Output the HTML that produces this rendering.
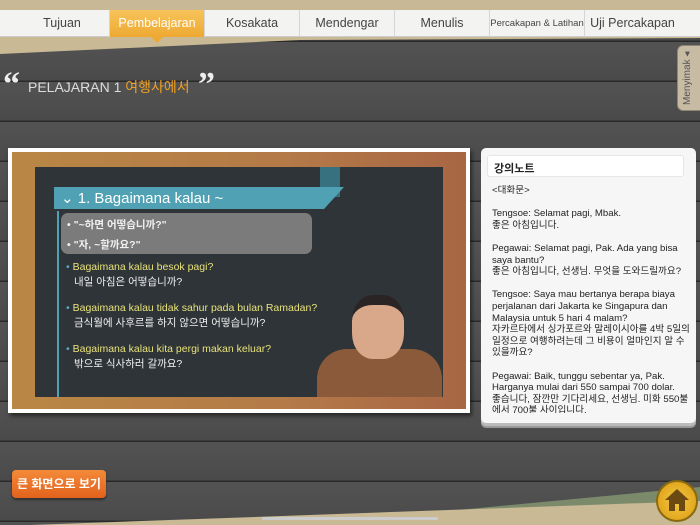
<!DOCTYPE html>
<html><head><meta charset="utf-8"><style>
*{margin:0;padding:0;box-sizing:border-box}
body{width:700px;height:525px;overflow:hidden;position:relative;font-family:"Liberation Sans","Noto Sans CJK KR",sans-serif;
background:#4b4b4b;}
.wood{position:absolute;inset:0;background:repeating-linear-gradient(180deg,#535353 0px,#4a4a4a 38px,#2a2a2a 39px,#2a2a2a 40px);background-position:0 2px}
.abs{position:absolute}
.nav{position:absolute;left:0;top:10px;width:700px;height:27px;background:#f3f3f1;border-bottom:1px solid #ccc}
.tab{position:absolute;top:0;height:27px;line-height:27px;text-align:center;font-size:12.5px;color:#444;border-right:1px solid #d5d5d5}
.note{position:absolute;left:481px;top:148px;width:215px;height:275px;background:#f6f6f6;border-radius:5px;box-shadow:0 3px 0 #bbb,0 5px 0 #999}
.note .hd{position:absolute;left:6px;top:7px;width:197px;height:22px;background:#fff;border:1px solid #e6e6e6;border-radius:3px;font-size:11px;font-weight:bold;padding:4px 6px;color:#222}
.note .tx{position:absolute;left:11px;top:37px;width:200px;font-size:9.6px;line-height:11.6px;color:#222;height:228px;overflow:hidden}
.scr{position:absolute;left:35px;top:167px;width:408px;height:230px;background:#2f3438;overflow:hidden}
.y{color:#e8e27a;font-size:10.5px}
.w{color:#f0f0f0;font-size:10.5px}
</style></head><body>
<div class="wood"></div>
<div class="abs" style="left:0;top:0;width:700px;height:12px;background:#c8b895"></div>
<svg class="abs" style="left:0;top:36px" width="700" height="20"><polygon points="0,0 700,0 700,2 300,4 0,18" fill="#c9b994"/></svg>
<div class="nav">
<div class="tab" style="left:0;width:110px;padding-left:15px">Tujuan</div>
<div class="tab" style="left:110px;width:95px;background:linear-gradient(#f7c35a,#eea932);color:#fff">Pembelajaran</div>
<div class="tab" style="left:205px;width:95px">Kosakata</div>
<div class="tab" style="left:300px;width:95px">Mendengar</div>
<div class="tab" style="left:395px;width:95px">Menulis</div>
<div class="tab" style="left:490px;width:95px;font-size:9.5px">Percakapan &amp; Latihan</div>
<div class="tab" style="left:585px;width:95px;border:none">Uji Percakapan</div>
</div>
<svg class="abs" style="left:151px;top:37px" width="12" height="6"><polygon points="0,0 12,0 6,6" fill="#eea932"/></svg>
<div class="abs" style="left:677px;top:45px;width:25px;height:66px;background:#c8bba3;border-radius:6px 0 0 6px;border:1px solid #8f8575"></div>
<div class="abs" style="left:682px;top:105px;transform:rotate(-90deg);transform-origin:0 0;font-size:10px;color:#555;white-space:nowrap">Menyimak ◂</div>
<div class="abs" style="left:3px;top:66px;font-size:34px;font-weight:bold;color:#eee;font-family:'Liberation Serif',serif">“</div>
<div class="abs" style="left:28px;top:77px;font-size:14px;color:#ddd">PELAJARAN 1 <span style="color:#f0a020">여행사에서</span></div>
<div class="abs" style="left:198px;top:66px;font-size:34px;font-weight:bold;color:#eee;font-family:'Liberation Serif',serif">”</div>
<div class="abs" style="left:8px;top:148px;width:462px;height:265px;background:#fff;box-shadow:2px 3px 4px rgba(0,0,0,.5)"></div>
<div class="abs" style="left:12px;top:152px;width:454px;height:257px;background:linear-gradient(90deg,#b98745,#b47a48 60%,#a86644)"></div>
<div class="scr">
<div class="abs" style="left:285px;top:0;width:20px;height:30px;background:#37707e"></div>
<svg class="abs" style="left:19px;top:20px" width="290" height="24"><polygon points="0,0 290,0 270,22 0,22" fill="#4fa1b3"/></svg>
<div class="abs" style="left:26px;top:22px;font-size:15px;color:#fff">⌄ 1. Bagaimana kalau ~</div>
<div class="abs" style="left:22px;top:44px;width:2px;height:195px;background:#4fa1b3"></div>
<div class="abs" style="left:26px;top:46px;width:251px;height:41px;background:#7b7b7b;border-radius:7px"></div>
<div class="abs w" style="left:32px;top:50px;font-weight:bold">•  "~하면 어떻습니까?"</div>
<div class="abs w" style="left:32px;top:70px;font-weight:bold">•  "자, ~할까요?"</div>
<div class="abs y" style="left:31px;top:94px"><span style="color:#5ab">•</span> Bagaimana kalau besok pagi?</div>
<div class="abs w" style="left:39px;top:107px">내일 아침은 어떻습니까?</div>
<div class="abs y" style="left:31px;top:135px"><span style="color:#5ab">•</span> Bagaimana kalau tidak sahur pada bulan Ramadan?</div>
<div class="abs w" style="left:39px;top:148px">금식월에 사후르를 하지 않으면 어떻습니까?</div>
<div class="abs y" style="left:31px;top:176px"><span style="color:#5ab">•</span> Bagaimana kalau kita pergi makan keluar?</div>
<div class="abs w" style="left:39px;top:189px">밖으로 식사하러 갈까요?</div>
<div class="abs" style="left:282px;top:182px;width:125px;height:60px;background:#8a5a3a;border-radius:30px 30px 0 0"></div>
<div class="abs" style="left:317px;top:128px;width:52px;height:64px;background:#d9a88a;border-radius:40%;border-top:10px solid #2a2424"></div>
</div>
<div class="note"><div class="hd">강의노트</div><div class="tx">
&lt;대화문&gt;<br><br>Tengsoe: Selamat pagi, Mbak.<br>좋은 아침입니다.<br><br>Pegawai: Selamat pagi, Pak. Ada yang bisa saya bantu?<br>좋은 아침입니다, 선생님. 무엇을 도와드릴까요?<br><br>Tengsoe: Saya mau bertanya berapa biaya perjalanan dari Jakarta ke Singapura dan Malaysia untuk 5 hari 4 malam?<br>자카르타에서 싱가포르와 말레이시아를 4박 5일의 일정으로 여행하려는데 그 비용이 얼마인지 알 수 있을까요?<br><br>Pegawai: Baik, tunggu sebentar ya, Pak. Harganya mulai dari 550 sampai 700 dolar.<br>좋습니다, 잠깐만 기다리세요, 선생님. 미화 550불에서 700불 사이입니다.
</div></div>
<svg class="abs" style="left:0;top:485px" width="700" height="40"><polygon points="300,40 700,2 700,40" fill="#7a8a6a"/><polygon points="30,40 700,16 700,40" fill="#c9b994"/></svg>
<div class="abs" style="left:262px;top:517px;width:176px;height:3px;background:#ccc;border-radius:2px"></div>
<div class="abs" style="left:12px;top:470px;width:94px;height:28px;background:linear-gradient(#f48a3a,#e2621c);border-radius:4px;color:#fff;font-size:12px;line-height:28px;text-align:center;font-weight:bold;box-shadow:0 2px 2px rgba(0,0,0,.4)">큰 화면으로 보기</div>
<div class="abs" style="left:656px;top:480px;width:42px;height:42px;border-radius:50%;background:radial-gradient(#f5c842,#d99a10);border:2px solid #8a6a10"></div>
<svg class="abs" style="left:664px;top:488px" width="26" height="24"><polygon points="13,1 25,12 21,12 21,23 15,23 15,16 11,16 11,23 5,23 5,12 1,12" fill="#6b4a12"/></svg>
</body></html>
